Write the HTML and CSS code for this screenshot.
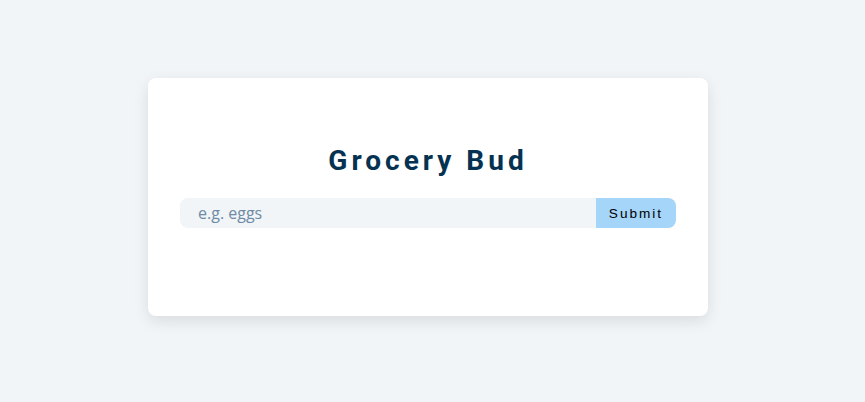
FILE: index.html
```html
<!DOCTYPE html>
<html lang="en">
<head>
<meta charset="utf-8">
<title>Grocery Bud</title>
<link rel="stylesheet" href="styles.css">
</head>
<body>
<main class="page">
  <section class="section-center">
    <form class="grocery-form">
      <h3 class="title">Grocery Bud</h3>
      <div class="form-control">
        <input type="text" class="grocery" placeholder="e.g. eggs">
        <button type="submit" class="submit-btn">Submit</button>
      </div>
    </form>
  </section>
</main>
</body>
</html>
```

FILE: styles.css
```css
* { box-sizing: border-box; }
html, body {
  margin: 0;
  background: #f1f5f8;
  font-family: "Open Sans", sans-serif;
}
.page {
  min-height: 402px;
  padding: 78px 0 40px 148px;
}
.section-center {
  width: 560px;
  height: 238px;
  background: #fff;
  border-radius: 8px;
  padding: 65px 32px 32px;
  box-shadow: 0 5px 15px rgba(0, 0, 0, 0.1);
}
.title {
  margin: 0 0 20px;
  font-family: Roboto, sans-serif;
  font-weight: 700;
  font-size: 28px;
  line-height: 35px;
  letter-spacing: 4px;
  text-align: center;
  color: #063251;
}
.form-control {
  display: flex;
  height: 30px;
}
.grocery {
  flex: 1 1 auto;
  min-width: 0;
  padding: 4px 4px 4px 18px;
  background: #f1f5f8;
  border: none;
  border-radius: 8px 0 0 8px;
  font-family: "Open Sans", sans-serif;
  font-size: 16px;
  color: #617d98;
  outline: none;
}
.grocery::placeholder { color: #6f8aa4; opacity: 1; }
.submit-btn {
  flex: 0 0 80px;
  background: #a5d5f8;
  border: none;
  border-radius: 0 8px 8px 0;
  font-family: "Liberation Sans", Arial, sans-serif;
  font-size: 13.6px;
  letter-spacing: 2px;
  color: #000;
  padding: 4px;
  cursor: pointer;
}
```
